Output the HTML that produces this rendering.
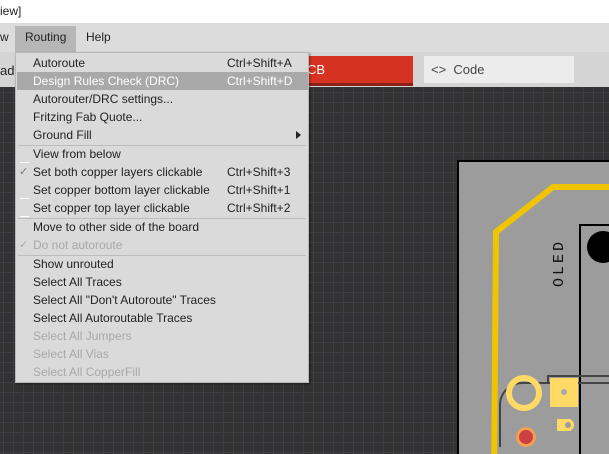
<!DOCTYPE html>
<html><head><style>
*{margin:0;padding:0;box-sizing:border-box}
html,body{width:609px;height:454px;overflow:hidden}
body{position:relative;font-family:"Liberation Sans",sans-serif;font-size:12px;color:#222;background:#303030}
.abs{position:absolute}
#title{left:0;top:0;width:609px;height:23px;background:#fff}
#bar{left:0;top:23px;width:609px;height:29px;background:#dcdcdc}
#tabs{left:0;top:52px;width:609px;height:35px;background:#d4d4d4}
#canvas{left:0;top:87px;width:609px;height:367px;overflow:hidden;background-color:#323232;background-image:linear-gradient(#3c3f44 1px,transparent 1px),linear-gradient(90deg,#3c3f44 1px,transparent 1px);background-size:10px 10px;background-position:3px 5px}
#menu{left:15px;top:52px;width:294px;height:331px;background:#dadada;border:1px solid #b8b8b8;box-shadow:1px 1px 2px rgba(0,0,0,.4)}
.it{position:absolute;left:17px;height:18px;line-height:18px;white-space:nowrap}
.sc{position:absolute;left:211px;height:18px;line-height:18px}
.dis{color:#a8a8a8}
.sep{position:absolute;left:2px;width:288px;height:1px;background:#bdbdbd}
.ck{position:absolute;left:3px;width:10px;height:18px;line-height:18px;font-size:11px;color:#777}
.bx{position:absolute;left:4px;width:9px;height:1px;background:#fff}
</style></head><body>
<div id="title" class="abs"><span class="abs" style="left:0;top:4px;font-size:12px">iew]</span></div>
<div id="bar" class="abs">
<span class="abs" style="left:0;top:7px">w</span>
<div class="abs" style="left:15px;top:3px;width:61px;height:26px;background:#b6b6b6"></div>
<span class="abs" style="left:25px;top:7px">Routing</span>
<span class="abs" style="left:86px;top:7px">Help</span>
</div>
<div id="tabs" class="abs">
<span class="abs" style="left:0;top:11px;font-size:13px">ad</span>
<div class="abs" style="left:250px;top:4px;width:163px;height:30px;background:#d63222;border-bottom:3px solid #8a2017"></div>
<span class="abs" style="left:307px;top:10px;color:#fff;font-size:13px">CB</span>
<div class="abs" style="left:424px;top:4px;width:150px;height:27px;background:#ececec"></div>
<span class="abs" style="left:431px;top:10px;font-size:13px;color:#444">&lt;&gt;&nbsp;&nbsp;Code</span>
</div>
<div id="canvas" class="abs">
<svg width="609" height="367" style="position:absolute;left:0;top:0">
<rect x="458" y="74" width="160" height="300" fill="#9c9c9c" stroke="#000" stroke-width="2"/>
<rect x="580" y="138" width="40" height="240" fill="#9c9c9c" stroke="#000" stroke-width="2"/>
<circle cx="603" cy="160" r="16" fill="#000"/>
<polyline points="609,100 553,100 496,145 494,395 520,415" fill="none" stroke="#f0c400" stroke-width="6"/>
<text x="0" y="0" transform="translate(563,200) rotate(-90)" font-family="Liberation Mono" font-size="15" fill="#111" letter-spacing="3">OLED</text>
<path d="M500,360 V318 a22,22 0 0 1 22,-22 H609" fill="none" stroke="#444" stroke-width="2"/>
<path d="M548,296 v-7 H609" fill="none" stroke="#444" stroke-width="2"/>
<circle cx="524" cy="306" r="15" fill="none" stroke="#ffd966" stroke-width="6"/>
<rect x="550" y="291" width="28" height="29" fill="#ffd966"/>
<circle cx="564" cy="305" r="3" fill="#aaa"/>
<rect x="557" y="332" width="14" height="12" fill="#ffd966"/>
<circle cx="568" cy="338" r="6" fill="#ffd966"/>
<circle cx="568" cy="338" r="3" fill="#9c9c9c"/>
<circle cx="526" cy="350" r="10" fill="#f0a050"/>
<circle cx="526" cy="350" r="7" fill="#cc4040"/>
</svg>
</div>
<div id="menu" class="abs">
<div class="it" style="top:1px">Autoroute</div><div class="sc" style="top:1px">Ctrl+Shift+A</div>
<div class="abs" style="left:1px;top:19px;width:291px;height:18px;background:#a9a9a9"></div>
<div class="it" style="top:19px;color:#fff">Design Rules Check (DRC)</div><div class="sc" style="top:19px;color:#fff">Ctrl+Shift+D</div>
<div class="it" style="top:37px">Autorouter/DRC settings...</div>
<div class="it" style="top:55px">Fritzing Fab Quote...</div>
<div class="it" style="top:73px">Ground Fill</div>
<div class="abs" style="left:280px;top:78px;width:0;height:0;border-left:5px solid #222;border-top:4px solid transparent;border-bottom:4px solid transparent"></div>
<div class="sep" style="top:92px"></div>
<div class="bx" style="top:109px"></div><div class="it" style="top:92px">View from below</div>
<div class="ck" style="top:110px">✓</div><div class="it" style="top:110px">Set both copper layers clickable</div><div class="sc" style="top:110px">Ctrl+Shift+3</div>
<div class="bx" style="top:145px"></div><div class="it" style="top:128px">Set copper bottom layer clickable</div><div class="sc" style="top:128px">Ctrl+Shift+1</div>
<div class="bx" style="top:163px"></div><div class="it" style="top:146px">Set copper top layer clickable</div><div class="sc" style="top:146px">Ctrl+Shift+2</div>
<div class="sep" style="top:165px"></div>
<div class="it" style="top:165px">Move to other side of the board</div>
<div class="ck dis" style="top:183px;color:#aaa">✓</div><div class="it dis" style="top:183px">Do not autoroute</div>
<div class="sep" style="top:202px"></div>
<div class="it" style="top:202px">Show unrouted</div>
<div class="it" style="top:220px">Select All Traces</div>
<div class="it" style="top:238px">Select All "Don't Autoroute" Traces</div>
<div class="it" style="top:256px">Select All Autoroutable Traces</div>
<div class="it dis" style="top:274px">Select All Jumpers</div>
<div class="it dis" style="top:292px">Select All Vias</div>
<div class="it dis" style="top:310px">Select All CopperFill</div>
</div>
</body></html>
